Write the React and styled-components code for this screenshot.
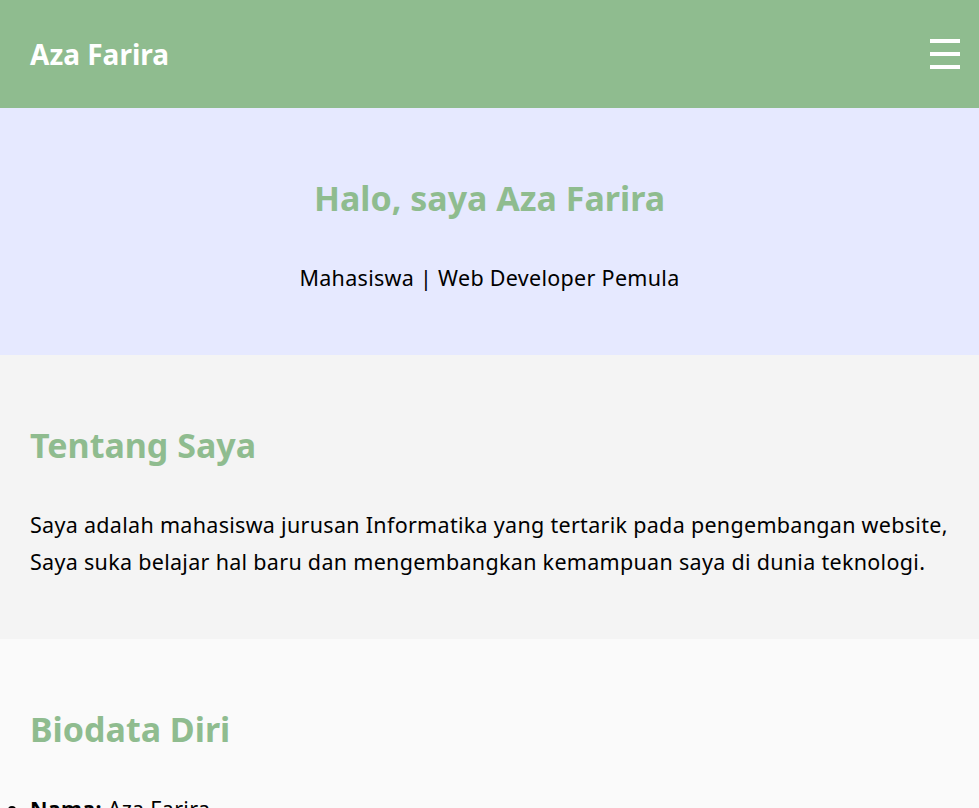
import React from 'react'
import styled, { createGlobalStyle } from 'styled-components'

const GlobalStyle = createGlobalStyle`
    body {
        margin: 0;
        font-family: "Noto Sans", "Open Sans", sans-serif;
        color: #000;
        background: #fafafa;
    }
`
const Header = styled.header`
    height: 108px;
    background: #8fbc8f;
    display: flex;
    align-items: center;
    justify-content: space-between;
    padding: 0 19px 0 30px;
    box-sizing: border-box;
`
const Logo = styled.h1`
    margin: 0;
    font-size: 28px;
    font-weight: 700;
    color: #fff;
`
const MenuButton = styled.button`
    background: none;
    border: none;
    padding: 0;
    width: 30px;
    display: flex;
    flex-direction: column;
    gap: 9.3px;
    cursor: pointer;
`
const Bar = styled.span`
    display: block;
    height: 3.7px;
    width: 30px;
    background: #fff;
`
const Section = styled.section`
    background: ${p => p.bg};
    padding: 69px 30px 59px;
    text-align: ${p => (p.center ? 'center' : 'left')};
`
const Title = styled.h2`
    margin: 0 0 40px;
    font-size: 34px;
    line-height: 42px;
    font-weight: 700;
    color: #8fbc8f;
`
const Text = styled.p`
    margin: 0;
    font-size: 21.5px;
    letter-spacing: 0.3px;
    line-height: 37px;
`
const List = styled.ul`
    margin: 0;
    padding: 0;
    font-size: 21.5px;
    letter-spacing: 0.3px;
    line-height: 37px;
`
const Item = styled.li``

function App() {
    return (
        <>
            <GlobalStyle />
            <Header>
                <Logo>Aza Farira</Logo>
                <MenuButton aria-label="menu">
                    <Bar />
                    <Bar />
                    <Bar />
                </MenuButton>
            </Header>
            <Section bg="#e6e9ff" center>
                <Title>Halo, saya Aza Farira</Title>
                <Text>Mahasiswa | Web Developer Pemula</Text>
            </Section>
            <Section bg="#f4f4f4">
                <Title>Tentang Saya</Title>
                <Text>
                    Saya adalah mahasiswa jurusan Informatika yang tertarik pada pengembangan website,
                    Saya suka belajar hal baru dan mengembangkan kemampuan saya di dunia teknologi.
                </Text>
            </Section>
            <Section bg="#fafafa">
                <Title>Biodata Diri</Title>
                <List>
                    <Item><b>Nama:</b> Aza Farira</Item>
                    <Item><b>Jurusan:</b> Informatika</Item>
                </List>
            </Section>
        </>
    )
}

export default App
